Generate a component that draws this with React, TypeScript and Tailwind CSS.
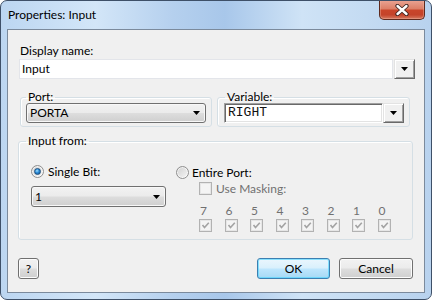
import React from "react";

const Arrow = () => (
  <svg width="7" height="4" viewBox="0 0 7 4" className="block">
    <path d="M0 0h7L3.5 4z" fill="#000" />
  </svg>
);

function Combo({ text, w, h }: { text: string; w: string; h: string }) {
  return (
    <div
      className={`${w} ${h} rounded-[3px] border border-[#707070] bg-[linear-gradient(#f2f2f2_0%,#ebebeb_48%,#dddddd_52%,#cfcfcf_100%)] shadow-[inset_0_0_0_1px_#f8f8f8] flex items-center justify-between pl-[3px] pr-[5px]`}
    >
      <span className="leading-[14px]">{text}</span>
      <Arrow />
    </div>
  );
}

function ClassicButton({ w, h }: { w: string; h: string }) {
  return (
    <div
      className={`${w} ${h} bg-[#f0f0f0] border border-t-[#e3e3e3] border-l-[#e3e3e3] border-r-[#696969] border-b-[#696969] shadow-[inset_1px_1px_0_#ffffff,inset_-1px_-1px_0_#a0a0a0] flex items-center justify-center`}
    >
      <Arrow />
    </div>
  );
}

function Radio({ checked }: { checked?: boolean }) {
  return (
    <span className="w-[13px] h-[13px] rounded-full border border-[#8f8f8f] bg-[linear-gradient(135deg,#d0d0d0,#f6f6f6)] shadow-[inset_0_0_0_1px_#ffffffaa] flex items-center justify-center shrink-0">
      {checked ? (
        <span className="w-[7px] h-[7px] rounded-full bg-[radial-gradient(circle_at_40%_35%,#9fe0ff_0%,#2b8ad6_45%,#0d4f8c_100%)] border border-[#1a4f80]" />
      ) : null}
    </span>
  );
}

function DisCheck({ checked }: { checked?: boolean }) {
  return (
    <span className="w-[13px] h-[13px] border border-[#b2b2b2] bg-[#f4f4f4] shadow-[inset_0_0_0_1px_#e6e6e6] flex items-center justify-center shrink-0">
      {checked ? (
        <svg width="11" height="11" viewBox="0 0 11 11" className="block">
          <path d="M2.5 5 L4.5 7.5 L8.8 2.8" stroke="#a3a3a3" strokeWidth="1.6" fill="none" />
        </svg>
      ) : null}
    </span>
  );
}

function CloseButton() {
  return (
    <div className="-mt-[1px] mr-[6px] w-[46px] h-[20px] rounded-b-[5px] border border-[#5e2a1e] border-t-0 bg-[linear-gradient(#eba595_0%,#dd8068_45%,#c9452a_55%,#c4432a_78%,#d77a60_100%)] shadow-[inset_0_0_0_1px_#f0b8a866] flex items-center justify-center">
      <svg width="16" height="12" viewBox="0 0 16 12" className="block">
        <path d="M3.5 2 L12.5 10 M12.5 2 L3.5 10" stroke="#3b2320" strokeWidth="4.2" strokeLinecap="round" />
        <path d="M3.5 2 L12.5 10 M12.5 2 L3.5 10" stroke="#ffffff" strokeWidth="2.4" strokeLinecap="round" />
      </svg>
    </div>
  );
}

export default function App() {
  const bits = ["7", "6", "5", "4", "3", "2", "1", "0"];
  return (
    <div className="w-[432px] h-[300px] font-['Lato',sans-serif] text-[12px] text-black">
      <div className="w-full h-full flex flex-col border border-[#3e5068] rounded-[7px] overflow-hidden bg-[linear-gradient(90deg,#bcd6f1_0%,#d3e6f8_22%,#b5d0ee_40%,#a8c7ea_52%,#cfe3f6_70%,#c4dbf2_85%,#b8d2ee_100%)]">
        <div className="h-[28px] flex items-start justify-between shrink-0">
          <span className="pl-[7px] pt-[6px] text-[12px] leading-[16px] text-[#000]">Properties: Input</span>
          <CloseButton />
        </div>
        <div className="flex-1 mx-[6px] mb-[6px] border border-[#7b8a9c] bg-[#f0f0f0] flex flex-col pl-[10px]">
          <div className="mt-[14px] pl-[2px] leading-[14px]">Display name:</div>
          <div className="mt-[1px] ml-[1px] flex gap-[1px]">
            <div className="w-[374px] h-[20px] bg-white border border-[#e3e5ea] flex items-center pl-[2px] leading-[14px]">Input</div>
            <ClassicButton w="w-[21px]" h="h-[20px]" />
          </div>
          <div className="mt-[12px] ml-[2px] flex gap-[5px]">
            <fieldset className="w-[192px] border border-[#d5dfe5] rounded-[3px] pl-[5px] pr-[5px] pb-[3px] shadow-[inset_1px_1px_0_#ffffff]">
              <legend className="px-[2px] leading-[12px]">Port:</legend>
              <Combo text="PORTA" w="w-full" h="h-[20px]" />
            </fieldset>
            <fieldset className="w-[193px] border border-[#d5dfe5] rounded-[3px] pl-[6px] pr-[5px] pb-[3px] shadow-[inset_1px_1px_0_#ffffff]">
              <legend className="ml-[1px] px-[2px] leading-[12px]">Variable:</legend>
              <div className="flex">
                <div className="flex-1 h-[20px] bg-white border border-t-[#a0a0a0] border-l-[#a0a0a0] border-r-[#ffffff] border-b-[#ffffff] shadow-[inset_1px_1px_0_#696969,inset_-1px_-1px_0_#e3e3e3] flex items-center pl-[3px] font-['Liberation_Mono',monospace] text-[13px] leading-[14px] text-[#111]">
                  RIGHT
                </div>
                <ClassicButton w="w-[21px]" h="h-[20px]" />
              </div>
            </fieldset>
          </div>
          <fieldset className="mt-[8px] w-[395px] border border-[#d5dfe5] rounded-[3px] pl-[12px] pt-[18px] pb-[7px] shadow-[inset_1px_1px_0_#ffffff] flex">
            <legend className="ml-[-5px] px-[2px] leading-[12px]">Input from:</legend>
            <div className="flex">
              <div className="w-[145px] flex flex-col">
                <div className="flex items-center h-[13px]">
                  <Radio checked />
                  <span className="ml-[4px] leading-[14px]">Single Bit:</span>
                </div>
                <div className="mt-[8px]">
                  <Combo text="1" w="w-[135px]" h="h-[21px]" />
                </div>
              </div>
              <div className="flex flex-col">
                <div className="flex items-center h-[13px] mt-[1px]">
                  <Radio />
                  <span className="ml-[3px] leading-[14px]">Entire Port:</span>
                </div>
                <div className="mt-[3px] ml-[23px] flex items-center h-[13px]">
                  <DisCheck />
                  <span className="ml-[4px] leading-[14px] text-[#707070]">Use Masking:</span>
                </div>
                <div className="mt-[9px] ml-[23px] flex">
                  {bits.map((b) => (
                    <span key={b} className="w-[25.5px] pl-[1px] leading-[14px] text-[#707070]">
                      {b}
                    </span>
                  ))}
                </div>
                <div className="mt-[1px] ml-[23px] flex">
                  {bits.map((b) => (
                    <span key={b} className="w-[25.5px]">
                      <DisCheck checked />
                    </span>
                  ))}
                </div>
              </div>
            </div>
          </fieldset>
          <div className="mt-[18px] flex items-center">
            <div className="w-[21px] h-[21px] rounded-[3px] border border-[#707070] bg-[linear-gradient(#f2f2f2_0%,#ebebeb_48%,#dddddd_52%,#cfcfcf_100%)] shadow-[inset_0_0_0_1px_#fcfcfc] flex items-center justify-center leading-[14px]">
              ?
            </div>
            <div className="ml-[218px] w-[73px] h-[21px] rounded-[3px] border border-[#3c7fb1] bg-[linear-gradient(#eaf6fd_0%,#d9f0fc_48%,#bee6fd_52%,#a7d9f5_100%)] shadow-[inset_0_0_0_1px_#48d4ff99] flex items-center justify-center leading-[14px]">
              OK
            </div>
            <div className="ml-[9px] w-[74px] h-[21px] rounded-[3px] border border-[#707070] bg-[linear-gradient(#f2f2f2_0%,#ebebeb_48%,#dddddd_52%,#cfcfcf_100%)] shadow-[inset_0_0_0_1px_#fcfcfc] flex items-center justify-center leading-[14px]">
              Cancel
            </div>
          </div>
        </div>
      </div>
    </div>
  );
}
